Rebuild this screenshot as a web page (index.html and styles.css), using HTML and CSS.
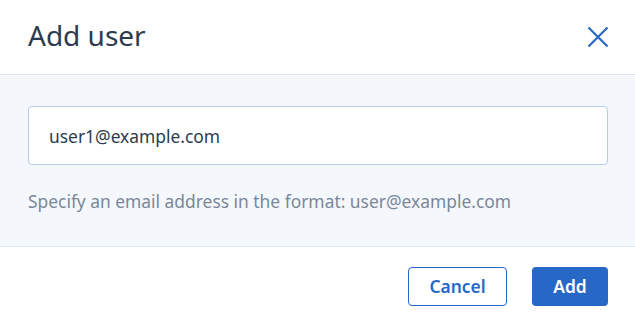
FILE: index.html
```html
<!DOCTYPE html>
<html lang="en">
<head>
    <meta charset="UTF-8">
    <meta name="viewport" content="width=device-width, initial-scale=1.0">
    <title>Add user</title>
    <link rel="stylesheet" href="styles.css">
</head>
<body>
    <div class="dialog">
        <header class="dialog-header">
            <h1>Add user</h1>
            <button class="close-btn" aria-label="Close">
                <svg width="22" height="22" viewBox="0 0 22 22">
                    <path d="M1.5 1.5 L20.5 20.5 M20.5 1.5 L1.5 20.5" stroke="currentColor" stroke-width="2.2" fill="none"/>
                </svg>
            </button>
        </header>

        <div class="dialog-body">
            <input class="email-input" type="text" value="user1@example.com">
            <p class="hint">Specify an email address in the format: user@example.com</p>
        </div>

        <footer class="dialog-footer">
            <button class="btn btn-secondary">Cancel</button>
            <button class="btn btn-primary">Add</button>
        </footer>
    </div>
</body>
</html>
```

FILE: styles.css
```css
:root {
    --primary-color: #2668c5;
    --text-color: #2c3b4f;
    --muted-color: #7b8799;
    --body-bg: #f4f7fc;
    --line-color: #dce6f5;
}

* {
    margin: 0;
    padding: 0;
    box-sizing: border-box;
}

body {
    font-family: "Noto Sans", "Open Sans", sans-serif;
    color: var(--text-color);
    background-color: #ffffff;
}

.dialog {
    width: 635px;
    height: 322px;
    display: flex;
    flex-direction: column;
}

.dialog-header {
    height: 75px;
    display: flex;
    align-items: center;
    justify-content: space-between;
    padding: 0 26px 0 28px;
    border-bottom: 1px solid var(--line-color);
}

h1 {
    font-size: 28px;
    font-weight: 400;
    line-height: 1;
    margin-top: -4px;
}

.close-btn {
    background: none;
    border: none;
    color: var(--primary-color);
    cursor: pointer;
    display: flex;
    margin-top: -1px;
}

.dialog-body {
    background-color: var(--body-bg);
    padding: 31px 27px 0 28px;
    height: 172px;
    border-bottom: 1px solid var(--line-color);
}

.email-input {
    width: 100%;
    height: 59px;
    padding: 0 20px;
    font-family: inherit;
    font-size: 17.4px;
    color: var(--text-color);
    background-color: #ffffff;
    border: 1px solid #b8cdec;
    border-radius: 4px;
    outline: none;
}

.hint {
    margin-top: 24px;
    font-size: 17.4px;
    color: var(--muted-color);
}

.dialog-footer {
    flex: 1;
    display: flex;
    justify-content: flex-end;
    align-items: center;
    gap: 25px;
    padding: 3px 27px 0 0;
}

.btn {
    height: 39px;
    font-family: inherit;
    font-size: 17.4px;
    font-weight: 600;
    border-radius: 4px;
    cursor: pointer;
}

.btn-secondary {
    width: 99px;
    background-color: #ffffff;
    color: var(--primary-color);
    border: 1px solid var(--primary-color);
}

.btn-primary {
    width: 76px;
    background-color: var(--primary-color);
    color: #ffffff;
    border: none;
}
```
